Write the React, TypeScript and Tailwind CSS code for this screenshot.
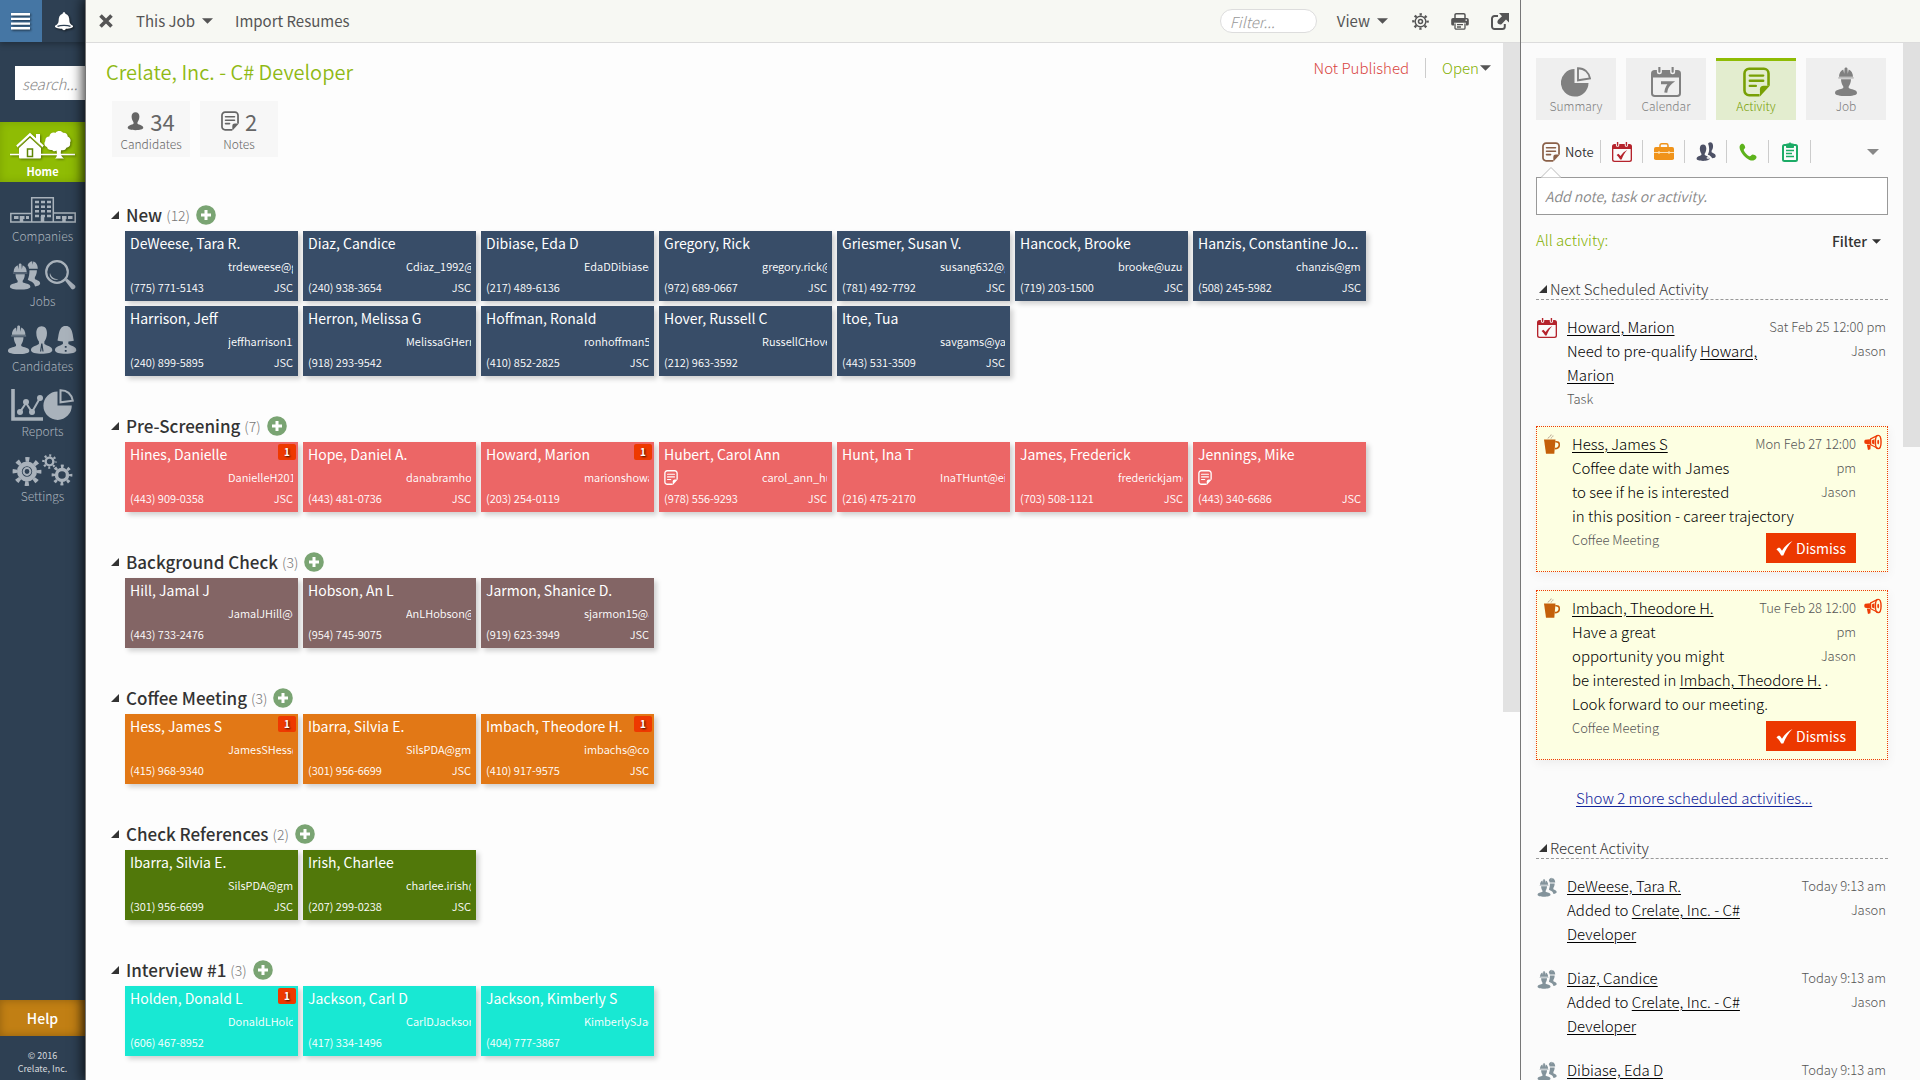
import type { ReactNode } from "react";

type IconProps = { className?: string };

/* ---------- icons ---------- */

const NoteIcon = ({ className }: IconProps) => (
  <svg viewBox="0 0 22 24" className={className} fill="none" aria-hidden="true">
    <path d="M13.500 22.800H5a3.800 3.800 0 0 1-3.800-3.800V5A3.800 3.800 0 0 1 5 1.200h12A3.800 3.800 0 0 1 20.800 5v10" stroke="currentColor" strokeWidth="2.100" />
    <path d="M21.800 15l-8 8.800V18a3 3 0 0 1 3-3z" fill="currentColor" />
    <path d="M5.500 6.800h11M5.500 11h11M5.500 15.200h5" stroke="currentColor" strokeWidth="1.900" strokeLinecap="round" />
  </svg>
);

const PersonShape = () => (
  <path d="M12 1c3.500 0 5.500 2.300 5.500 5.600 0 3.100-1.300 5.600-2.700 7.200v2C17 17.300 23 17.500 23 21c0 2-5 3-11 3S1 23 1 21c0-3.500 6-3.700 8.200-5.200v-2C7.800 12.200 6.500 9.700 6.500 6.600 6.500 3.300 8.500 1 12 1z" />
);

const PersonIcon = ({ className }: IconProps) => (
  <svg viewBox="0 0 24 27" className={className} fill="currentColor" aria-hidden="true"><g transform="scale(1 1.100)"><PersonShape /></g></svg>
);

const WorkerShape = () => (
  <>
    <path d="M5 8.200c0-3.200 2-5.300 4.300-6.100l.9 3.600.4-4.600c.2-.9 2.600-.9 2.800 0l.4 4.600.9-3.600C17 2.900 19 5 19 8.200z" />
    <rect x="4.200" y="8.600" width="15.600" height="1" rx=".5" opacity=".6" />
    <path d="M7 10.200h10c0 2.400-1 4.600-2.300 6v1.200C17 18.700 23 18.400 23 21.600c0 1.800-5 2.600-11 2.600S1 23.400 1 21.600c0-3.200 6-2.900 8.300-4.200v-1.200C8 14.800 7 12.600 7 10.200z" />
  </>
);

const WorkerIcon = ({ className }: IconProps) => (
  <svg viewBox="0 0 24 30" className={className} fill="currentColor" aria-hidden="true"><g transform="scale(1 1.200)"><WorkerShape /></g></svg>
);

const BackWorkerShape = () => (
  <>
    <path d="M20 4.500c1-2 3-3.300 5-3.400l.3 3 .8-2.900c2.600.3 4.800 2.600 4.900 6.300H21.500c-.2-1.200-.7-2.200-1.500-3z" />
    <path d="M22 9h8c0 2.400-.8 4.400-2.200 6v1.600c1.900 1.200 5.700 1.300 5.700 3.900 0 1.400-2.500 2.300-5.500 2.500-.6-2.700-2.600-3.900-5.500-4.800-1.300-.4-1.800-.6-2.300-1.200C21.500 14.800 22 12 22 9z" />
  </>
);

const WorkersIcon = ({ className }: IconProps) => (
  <svg viewBox="0 0 34 34" className={className} fill="currentColor" aria-hidden="true">
    <g transform="scale(1 1.250)">
      <BackWorkerShape />
      <g transform="translate(0 2.500)"><WorkerShape /></g>
    </g>
  </svg>
);

const PeopleIcon = ({ className }: IconProps) => (
  <svg viewBox="0 0 34 33" className={className} fill="currentColor" aria-hidden="true">
    <g transform="scale(1 1.220)">
      <path d="M24 0c3.300 0 5 2.200 5 5.200 0 3-1 5-2.500 6.500v2c2.500 1.500 7 2 7 5.300 0 2-2.500 3-6 3.200-1.500-3-4.500-3.800-7.500-5 2-3 3-6 2-11-.3-1.600-.9-3-1.500-4C21.200 1 22.300 0 24 0z" />
      <g transform="translate(0 2)"><PersonShape /></g>
      <path d="M17.500 22l4.500-4.500 2 2.500-3 4z" fill="#fcfcfc" opacity=".8" />
    </g>
  </svg>
);

const CalendarIcon = ({ className, children }: IconProps & { children: ReactNode }) => (
  <svg viewBox="0 0 24 24" className={className} fill="none" aria-hidden="true">
    <path fill="currentColor" fillRule="evenodd" d="M3 2.300h1.700v1.500a2 2 0 0 0 4 0V2.300h6.600v1.500a2 2 0 0 0 4 0V2.300H21a3 3 0 0 1 3 3V21a3 3 0 0 1-3 3H3a3 3 0 0 1-3-3V5.300a3 3 0 0 1 3-3zM1.600 8.300V21c0 .8.600 1.400 1.400 1.400h18c.8 0 1.400-.6 1.400-1.400V8.300z" />
    <path d="M6.700.3v3.500M17.300.3v3.500" stroke="currentColor" strokeWidth="1.700" strokeLinecap="round" />
    {children}
  </svg>
);

const CheckCalendarIcon = ({ className }: IconProps) => (
  <CalendarIcon className={className}>
    <path d="M5.500 15.500l2.200-1.500 2.600 2.900c2-3.300 4.300-5.700 8-7.400-3 3.200-5 6.500-6.800 11.500H9.800c-1.300-2.500-2.600-4-4.300-5.500z" fill="currentColor" />
  </CalendarIcon>
);

const WeekCalendarIcon = ({ className }: IconProps) => (
  <CalendarIcon className={className}>
    <path d="M8 12.500h8c-3 2.500-4 5-4.200 8" stroke="currentColor" strokeWidth="2.400" />
  </CalendarIcon>
);

const PieIcon = ({ className }: IconProps) => (
  <svg viewBox="0 0 30 30" className={className} aria-hidden="true">
    <path d="M13.500 2v14h14A13.800 13.800 0 1 1 13.500 2z" fill="currentColor" />
    <path d="M17 1.200c6.500 0 11 4.300 12 10.300l-12 1.800z" fill="none" stroke="currentColor" strokeWidth="1.900" />
  </svg>
);

const GearIcon = ({ className }: IconProps) => (
  <svg viewBox="0 0 24 24" className={className} fill="none" stroke="currentColor" aria-hidden="true">
    <circle cx="12" cy="12" r="7.500" strokeWidth="2" />
    <circle cx="12" cy="12" r="2.800" strokeWidth="2.200" />
    <circle cx="12" cy="12" r="10" strokeWidth="3.400" strokeDasharray="3.200 4.654" strokeDashoffset="1.600" />
  </svg>
);

const Gear = ({ cx, cy, r }: { cx: number; cy: number; r: number }) => {
  const step = (2 * Math.PI * r * 1.3) / 8;
  return (
    <g fill="none" stroke="currentColor">
      <circle cx={cx} cy={cy} r={r * 0.82} strokeWidth={r * 0.52} />
      <circle cx={cx} cy={cy} r={r * 1.3} strokeWidth={r * 0.5} strokeDasharray={`${step * 0.42} ${step * 0.58}`} strokeDashoffset={step * 0.21} />
    </g>
  );
};

const MenuIcon = ({ className }: IconProps) => (
  <svg viewBox="0 0 20 17" className={className} fill="#fff" aria-hidden="true">
    <path d="M0 0h19v2.400H0zM0 4.700h19v2.400H0zM0 9.400h19v2.400H0zM0 14h19v2.400H0z" />
  </svg>
);

const BellIcon = ({ className }: IconProps) => (
  <svg viewBox="0 0 20 20" className={className} fill="#fff" aria-hidden="true">
    <path d="M10 1.200c.9 0 1.400.7 1.400 1.500 3 .9 4 3.700 4 7 0 2.200 1 3.600 3.600 5.300v1H1v-1c2.600-1.700 3.600-3.100 3.600-5.300 0-3.300 1-6.100 4-7 0-.8.500-1.500 1.400-1.500z" />
    <ellipse cx="10" cy="15.500" rx="9" ry="2.300" />
    <circle cx="10" cy="17.500" r="1.800" />
    <path d="M3.500 15.300c3-1.200 10-1.200 13 0" stroke="#2e4053" strokeWidth="1.300" fill="none" />
  </svg>
);

const CloseIcon = ({ className }: IconProps) => (
  <svg viewBox="0 0 14 14" className={className} stroke="currentColor" strokeWidth="3.600" aria-hidden="true">
    <path d="M1.500 1.500l11 11M12.500 1.500l-11 11" />
  </svg>
);

const CaretIcon = ({ className }: IconProps) => (
  <svg viewBox="0 0 12 6" className={className} fill="currentColor" aria-hidden="true"><path d="M0 0h12L6 6z" /></svg>
);

const CornerIcon = ({ className }: IconProps) => (
  <svg viewBox="0 0 9 9" className={className} fill="currentColor" aria-hidden="true"><path d="M0 9L9 0v9z" /></svg>
);

const PrinterIcon = ({ className }: IconProps) => (
  <svg viewBox="0 0 18 17" className={className} fill="none" stroke="currentColor" aria-hidden="true">
    <path d="M4 5.500V2a1.200 1.200 0 0 1 1.200-1.200h7.600A1.200 1.200 0 0 1 14 2v3.500" strokeWidth="1.500" />
    <path fillRule="evenodd" d="M2 5h14a1.800 1.800 0 0 1 1.800 1.800V11a1.500 1.500 0 0 1-1.500 1.500H15V9.700H3v2.800H1.700A1.500 1.500 0 0 1 .2 11V6.800A1.800 1.800 0 0 1 2 5z" fill="currentColor" stroke="none" />
    <path d="M4 10.500V15a1.200 1.200 0 0 0 1.200 1.200h7.600A1.200 1.200 0 0 0 14 15v-4.500M6 11.700h6M6 14h4" strokeWidth="1.300" />
    <path d="M14.500 7.200h1.500" stroke="#fff" strokeWidth="1.200" />
  </svg>
);

const ExternalIcon = ({ className }: IconProps) => (
  <svg viewBox="0 0 18 17" className={className} fill="none" stroke="currentColor" aria-hidden="true">
    <path d="M7 3H3.500A2.500 2.500 0 0 0 1 5.500v8A2.500 2.500 0 0 0 3.500 16h7.800a2.500 2.500 0 0 0 2.500-2.500V11" strokeWidth="2" />
    <path d="M8 0h10v9.500l-3-3-4.500 4.800c-1.500.5-3.300.2-4-1.500-.3-1.400.2-2.600 1-3.400L11 3.200z" fill="currentColor" stroke="none" />
  </svg>
);

const PlusIcon = ({ className }: IconProps) => (
  <svg viewBox="0 0 20 20" className={className} aria-hidden="true">
    <circle cx="10" cy="10" r="9.800" fill="#7aa473" />
    <path d="M10 5v10M5 10h10" stroke="#fff" strokeWidth="3" />
  </svg>
);

const BriefcaseIcon = ({ className }: IconProps) => (
  <svg viewBox="0 0 20 17" className={className} aria-hidden="true">
    <path d="M6 4V2.500A1.700 1.700 0 0 1 7.700.8h4.600A1.700 1.700 0 0 1 14 2.500V4" fill="none" stroke="currentColor" strokeWidth="1.500" />
    <rect y="4" width="20" height="13" rx="1.800" fill="currentColor" />
    <path d="M0 9.500h20M5 8v3M15 8v3" stroke="#fbe0b5" strokeWidth="1.100" />
  </svg>
);

const PhoneIcon = ({ className }: IconProps) => (
  <svg viewBox="0 0 20 20" className={className} fill="currentColor" aria-hidden="true">
    <path d="M2.500 1.200C4 .2 5 .8 5.900 2.300c1 1.700 1.400 2.800.4 3.900-1 .9-1.300 1.300-.8 2.400 1 2.300 3.500 4.900 5.900 6 1 .4 1.500 0 2.300-1 .8-1.200 2-1.200 3.700-.2 2.200 1.300 2.500 2.200 1.500 3.800-1.500 2.300-4.300 2.900-7.300 1.600C6.800 16.500 2.700 12 1.100 7.300.2 4.600.6 2.500 2.500 1.200z" />
  </svg>
);

const ClipboardIcon = ({ className }: IconProps) => (
  <svg viewBox="0 0 16 20" className={className} fill="none" stroke="currentColor" aria-hidden="true">
    <rect x="1" y="3" width="14" height="16" rx="1.500" strokeWidth="2" />
    <path d="M4.500 2h2a1.600 1.600 0 0 1 3 0h2v3.500h-7z" fill="currentColor" strokeWidth="1" />
    <path d="M4 8.500h8M4 11.500h6M4 14.500h8" strokeWidth="1.500" />
  </svg>
);

const CoffeeIcon = ({ className }: IconProps) => (
  <svg viewBox="0 0 16 20" className={className} fill="none" aria-hidden="true">
    <path d="M0 5.500h11.500L10.300 19.700H2z" fill="#c4600a" />
    <path d="M11.300 7.800c2.500-.3 4 .6 4 2.900 0 2.600-1.800 3.900-4.500 3.900" stroke="#c4600a" strokeWidth="1.600" />
    <path d="M4 4.500c0-1.800 3-1.400 3.200-4M7 4.500C7.200 3.300 9 3.200 9 1.500" stroke="#b9a58e" strokeWidth="1" />
  </svg>
);

const MegaphoneIcon = ({ className }: IconProps) => (
  <svg viewBox="0 0 19 17" className={className} fill="none" aria-hidden="true">
    <ellipse cx="15" cy="8" rx="3" ry="7" stroke="#ee3c06" strokeWidth="1.500" />
    <path d="M14.500 1L7 4.800v6l7.500 3.700" stroke="#ee3c06" strokeWidth="1.300" />
    <path d="M6.300 5L1.300 5.700C0 6 0 9.500 1.300 9.800l5 .8zM3 10.600l4 .8-.2 4.300-2.600.6zM8.500 6L11 5v5.500L8.500 9.500z" fill="#ee3c06" />
    <ellipse cx="15" cy="8" rx="1" ry="2.500" fill="#ee3c06" />
  </svg>
);

const CheckIcon = ({ className }: IconProps) => (
  <svg viewBox="0 0 17 15" className={className} fill="currentColor" aria-hidden="true">
    <path d="M.5 8.500C1.500 7 2.700 6.500 4 7l2 2.700C8.800 5.200 12.300 2 16.500 0 12.500 4 9.700 8.500 7.300 14.500H5.200C4 12 2.500 10 .5 8.500z" />
  </svg>
);

const HomeIcon = () => (
  <svg viewBox="0 0 66 28" className="h-7 w-[66px] drop-shadow-[1px_1px_1px_rgba(0,0,0,0.4)]" aria-hidden="true">
    <path d="M0 23.500h65" stroke="#fff" strokeWidth="1.500" />
    <path d="M7 15.500L20 3.500l13 12" fill="none" stroke="#fff" strokeWidth="2.400" />
    <path d="M26 3h4v9l-4-4z" fill="#fff" />
    <path d="M9 17L20 6.800 31 17v9.500a1 1 0 0 1-1 1H10a1 1 0 0 1-1-1z" fill="#fff" />
    <path d="M8 16.200L20 5.200l12 11" fill="none" stroke="#7fa604" strokeWidth=".8" />
    <path d="M17.500 18h5v7.500h-5z" fill="#fff" stroke="#5f8605" strokeWidth="1.500" />
    <path d="M45 27.500c2-1.500 2.500-4 1.500-8-1.500 1-3.500.8-4.300-.6-2.500.6-4.900-.5-5.200-2.900-2.600-.8-3.400-4-1.700-6-.3-2.600 1.600-4.500 4-4.500C40 2 42.800.8 45.300 2c2-2.500 6-2.400 7.700-.3 2.700-.3 4.700 1.400 4.700 3.800 2.700 1 3.700 4 2.300 6.300.8 2.700-1 4.900-3.600 4.900-.8 2.300-3 3-5 2.200-1.300 3.300-.7 6.800 2.600 8.600z" fill="#fff" />
  </svg>
);

const CompaniesIcon = () => (
  <svg viewBox="0 0 66 26" className="h-[26px] w-[66px]" fill="none" stroke="currentColor" aria-hidden="true">
    <path d="M21.700 25V.8h21.600V25M21.700 16.500H.8V25h64.400v-9H43.300" strokeWidth="1.500" />
    <path d="M25 5h16M25 9.700h16M25 14.300h16M25 19h16" strokeWidth="2.600" strokeDasharray="4 2" />
    <path d="M4 20.500h15M46 20.500h17" strokeWidth="3" strokeDasharray="4.500 1.500" />
    <path d="M11.500 19v6M32.500 19v6M54 19v6" strokeWidth="3.500" />
  </svg>
);

const JobsIcon = () => (
  <svg viewBox="0 0 67 30" className="h-[30px] w-[67px]" fill="currentColor" aria-hidden="true">
    <g transform="scale(.93 1.150)"><BackWorkerShape /></g>
    <g transform="translate(0 3) scale(.93 1.100)"><WorkerShape /></g>
    <circle cx="48" cy="12" r="10.800" fill="none" stroke="currentColor" strokeWidth="2.200" />
    <path d="M41 13c1 4 4.500 6.500 8.500 6.200-4.500 2-10-1.500-8.500-6.200z" />
    <path d="M56 20.500l2-2 8 7c1.500 2-1 5-3.500 3.500z" />
  </svg>
);

const CandidatesIcon = () => (
  <svg viewBox="0 0 71 30" className="h-[30px] w-[71px]" fill="currentColor" aria-hidden="true">
    <g transform="scale(.97 1.200)"><WorkerShape /></g>
    <g transform="translate(23 0) scale(.97 1.200)"><PersonShape /></g>
    <path d="M34.800 18.500l1.200 8M34.800 18.500l-1.200 8" stroke="#2e4053" strokeWidth="1.200" />
    <g transform="translate(47 0) scale(.97 1.200)"><PersonShape /></g>
    <path d="M50.500 15.500C52 12 51 1 58.700 1S65.500 12 67 15.500c-3 1.500-13.500 1.500-16.500 0z" />
    <path d="M58.700 21v1.800M58.700 25v1.800" stroke="#2e4053" strokeWidth="1.800" />
  </svg>
);

const ReportsIcon = () => (
  <svg viewBox="0 0 63 32" className="h-8 w-[63px]" fill="none" stroke="currentColor" aria-hidden="true">
    <path d="M2 0v30h30" strokeWidth="3.600" />
    <path d="M9 23l6-9 6 9 8-14" strokeWidth="2" />
    <g fill="currentColor" stroke="none">
      <circle cx="9" cy="23" r="3" /><circle cx="15" cy="13" r="3" /><circle cx="21" cy="23" r="3" /><circle cx="29" cy="9" r="3" />
      <path d="M46.500 2.500v14h14.300A14.200 14.200 0 1 1 46.500 2.500z" />
    </g>
    <path d="M49.500 1.200c6.500 0 11 4 12.300 10.500l-12.300 1.600z" strokeWidth="2" />
  </svg>
);

const SettingsIcon = () => (
  <svg viewBox="0 0 61 32" className="h-8 w-[61px]" aria-hidden="true">
    <Gear cx={15} cy={17.500} r={9.300} />
    <circle cx="15" cy="17.500" r="3.400" fill="none" stroke="currentColor" strokeWidth="2" />
    <Gear cx={37.500} cy={7.500} r={4.700} />
    <Gear cx={50} cy={21} r={6.700} />
  </svg>
);

/* ---------- data ---------- */

type Candidate = { name: string; email?: string; phone: string; jsc?: boolean; badge?: boolean; note?: boolean };
type Stage = { title: string; count: number; color: string; people: Candidate[] };

const stages: Stage[] = [
  {
    title: "New", count: 12, color: "bg-[#384d68]",
    people: [
      { name: "DeWeese, Tara R.", email: "trdeweese@gm", phone: "(775) 771-5143", jsc: true },
      { name: "Diaz, Candice", email: "Cdiaz_1992@g", phone: "(240) 938-3654", jsc: true },
      { name: "Dibiase, Eda D", email: "EdaDDibiase@", phone: "(217) 489-6136" },
      { name: "Gregory, Rick", email: "gregory.rick@g", phone: "(972) 689-0667", jsc: true },
      { name: "Griesmer, Susan V.", email: "susang632@gm", phone: "(781) 492-7792", jsc: true },
      { name: "Hancock, Brooke", email: "brooke@uzu-", phone: "(719) 203-1500", jsc: true },
      { name: "Hanzis, Constantine Jo...", email: "chanzis@gma", phone: "(508) 245-5982", jsc: true },
      { name: "Harrison, Jeff", email: "jeffharrison12", phone: "(240) 899-5895", jsc: true },
      { name: "Herron, Melissa G", email: "MelissaGHerr", phone: "(918) 293-9542" },
      { name: "Hoffman, Ronald", email: "ronhoffman5", phone: "(410) 852-2825", jsc: true },
      { name: "Hover, Russell C", email: "RussellCHove", phone: "(212) 963-3592" },
      { name: "Itoe, Tua", email: "savgams@ya", phone: "(443) 531-3509", jsc: true },
    ],
  },
  {
    title: "Pre-Screening", count: 7, color: "bg-[#ec6666]",
    people: [
      { name: "Hines, Danielle", email: "DanielleH201", phone: "(443) 909-0358", jsc: true, badge: true },
      { name: "Hope, Daniel A.", email: "danabramho", phone: "(443) 481-0736", jsc: true },
      { name: "Howard, Marion", email: "marionshowa", phone: "(203) 254-0119", badge: true },
      { name: "Hubert, Carol Ann", email: "carol_ann_hu", phone: "(978) 556-9293", jsc: true, note: true },
      { name: "Hunt, Ina T", email: "InaTHunt@ei", phone: "(216) 475-2170" },
      { name: "James, Frederick", email: "frederickjame", phone: "(703) 508-1121", jsc: true },
      { name: "Jennings, Mike", phone: "(443) 340-6686", jsc: true, note: true },
    ],
  },
  {
    title: "Background Check", count: 3, color: "bg-[#836565]",
    people: [
      { name: "Hill, Jamal J", email: "JamalJHill@e", phone: "(443) 733-2476" },
      { name: "Hobson, An L", email: "AnLHobson@", phone: "(954) 745-9075" },
      { name: "Jarmon, Shanice D.", email: "sjarmon15@a", phone: "(919) 623-3949", jsc: true },
    ],
  },
  {
    title: "Coffee Meeting", count: 3, color: "bg-[#e27816]",
    people: [
      { name: "Hess, James S", email: "JamesSHess@", phone: "(415) 968-9340", badge: true },
      { name: "Ibarra, Silvia E.", email: "SilsPDA@gm", phone: "(301) 956-6699", jsc: true },
      { name: "Imbach, Theodore H.", email: "imbachs@co", phone: "(410) 917-9575", jsc: true, badge: true },
    ],
  },
  {
    title: "Check References", count: 2, color: "bg-[#51780a]",
    people: [
      { name: "Ibarra, Silvia E.", email: "SilsPDA@gm", phone: "(301) 956-6699", jsc: true },
      { name: "Irish, Charlee", email: "charlee.irish@", phone: "(207) 299-0238", jsc: true },
    ],
  },
  {
    title: "Interview #1", count: 3, color: "bg-[#18e8d3]",
    people: [
      { name: "Holden, Donald L", email: "DonaldLHold", phone: "(606) 467-8952", badge: true },
      { name: "Jackson, Carl D", email: "CarlDJackson", phone: "(417) 334-1496" },
      { name: "Jackson, Kimberly S", email: "KimberlySJac", phone: "(404) 777-3867" },
    ],
  },
];

/* ---------- sidebar ---------- */

const navItems = [
  { label: "Companies", icon: <CompaniesIcon /> },
  { label: "Jobs", icon: <JobsIcon /> },
  { label: "Candidates", icon: <CandidatesIcon /> },
  { label: "Reports", icon: <ReportsIcon /> },
  { label: "Settings", icon: <SettingsIcon /> },
];

function Sidebar() {
  return (
    <aside className="flex w-[85px] shrink-0 flex-col bg-[#2e4053]">
      <div className="flex h-[42px] shrink-0 shadow-[0_2px_6px_rgba(0,0,0,0.3)]">
        <button aria-label="Menu" className="flex w-[42px] items-center justify-center bg-[#4576a4]">
          <MenuIcon className="h-[17px] w-5 drop-shadow-[1px_1px_1px_rgba(0,0,0,0.6)]" />
        </button>
        <button aria-label="Notifications" className="flex flex-1 items-center justify-center">
          <BellIcon className="h-5 w-5 drop-shadow-[1px_1px_1px_rgba(0,0,0,0.6)]" />
        </button>
      </div>
      <div className="mt-6 overflow-hidden pl-[15px]">
        <input aria-label="Search" placeholder="search..." className="h-[34px] w-24 bg-white px-[7px] text-[15px] font-light italic placeholder:text-[#8a8a8a]" />
      </div>
      <nav className="mt-[22px] flex flex-col gap-[5px]">
        <a href="#home" className="flex h-[60px] flex-col items-center bg-[#8fbc04] pt-[7px] text-[11px] font-bold text-white shadow-[inset_0_0_8px_rgba(0,0,0,0.15)]">
          <span className="flex h-8 items-center"><HomeIcon /></span>
          <span className="leading-5">Home</span>
        </a>
        {navItems.map((n) => (
          <a key={n.label} href={`#${n.label.toLowerCase()}`} className="flex h-[60px] flex-col items-center pt-[7px] text-xs font-light text-[#a9b2bb]">
            <span className="flex h-8 items-center">{n.icon}</span>
            <span className="leading-5">{n.label}</span>
          </a>
        ))}
      </nav>
      <button className="mt-auto h-9 bg-[#c17f14] text-sm font-medium text-white shadow-[inset_0_0_8px_rgba(0,0,0,0.25)]">Help</button>
      <p className="pt-[13px] pb-[5px] text-center text-[9px] leading-[13px] text-[#d5d9dd]">
        © 2016<br />Crelate, Inc.
      </p>
    </aside>
  );
}

/* ---------- pipeline ---------- */

function CandidateCard({ c, color }: { c: Candidate; color: string }) {
  return (
    <article className={`${color} relative h-[70px] w-[173px] px-[5px] pt-0.5 text-white shadow-[3px_3px_5px_rgba(0,0,0,0.18)]`}>
      <h3 className="overflow-hidden text-sm leading-5 font-normal whitespace-nowrap">{c.name}</h3>
      <div className="mt-[5px] flex h-4 items-center justify-between text-[11px] leading-4 font-[350]">
        <span>{c.note && <NoteIcon className="h-[15px] w-3.5" />}</span>
        <span className="w-[65px] overflow-hidden whitespace-nowrap">{c.email}</span>
      </div>
      <div className="mt-[5px] flex justify-between text-[11px] leading-4 font-[350]">
        <span>{c.phone}</span>
        {c.jsc && <span>JSC</span>}
      </div>
      {c.badge && (
        <span className="absolute top-0.5 right-0.5 flex h-4 w-[18px] items-center justify-center rounded-[2px] bg-[#ee3900] text-[10px] leading-4 font-bold [text-shadow:1px_1px_2px_rgba(0,0,0,0.8)]">1</span>
      )}
    </article>
  );
}

function StageSection({ stage }: { stage: Stage }) {
  return (
    <section className="mb-[37px]">
      <div className="flex h-[26px] items-center">
        <button aria-label={`Collapse ${stage.title}`} className="ml-[25px] text-[#333]"><CornerIcon className="h-2 w-2" /></button>
        <h2 className="ml-[7px] text-[17px] leading-[26px] font-medium text-[#333]">{stage.title}</h2>
        <span className="ml-1 text-sm leading-[26px] font-light text-[#777]">({stage.count})</span>
        <button aria-label={`Add to ${stage.title}`} className="ml-1.5"><PlusIcon className="h-5 w-5" /></button>
      </div>
      <div className="mt-[3px] ml-[39px] flex flex-wrap gap-[5px]">
        {stage.people.map((c) => <CandidateCard key={c.name} c={c} color={stage.color} />)}
      </div>
    </section>
  );
}

function Pipeline() {
  return (
    <main className="flex min-w-0 flex-1 flex-col">
      <header className="flex h-[43px] shrink-0 items-center border-b border-[#dcdcdc] bg-[#f7f8f3] text-[15px] leading-5 text-[#555]">
        <button aria-label="Close" className="ml-[13px]"><CloseIcon className="h-3.5 w-3.5" /></button>
        <button className="ml-[23px] flex items-center gap-[7px]">This Job <CaretIcon className="h-1.5 w-[11px]" /></button>
        <button className="ml-[22px]">Import Resumes</button>
        <input aria-label="Filter candidates" placeholder="Filter..." className="ml-auto h-6 w-[97px] rounded-full border border-[#ddd] bg-white px-[9px] text-[15px] font-light italic placeholder:text-[#999]" />
        <button className="ml-5 flex items-center gap-[7px]">View <CaretIcon className="h-1.5 w-[11px]" /></button>
        <button aria-label="Options" className="ml-6"><GearIcon className="h-[17px] w-[17px]" /></button>
        <button aria-label="Print" className="ml-[22px]"><PrinterIcon className="h-[17px] w-[18px]" /></button>
        <button aria-label="Open in new window" className="mr-[11px] ml-[22px]"><ExternalIcon className="h-[17px] w-[18px]" /></button>
      </header>
      <div className="flex min-h-0 flex-1">
        <div className="min-w-0 flex-1 overflow-hidden bg-[#fdfdfd] pt-[13px]">
          <div className="flex items-start justify-between pr-3 pl-5">
            <h1 className="text-xl leading-8 font-[350] text-[#8fb914]">Crelate, Inc. - C# Developer</h1>
            <div className="flex h-6 items-center text-[15px] font-light">
              <span className="text-[#d9453f]">Not Published</span>
              <span className="mx-4 h-5 w-px bg-[#ccc]" />
              <button className="flex items-center gap-px text-[#84b000]">Open <CaretIcon className="h-1.5 w-[11px] text-[#555]" /></button>
            </div>
          </div>
          <div className="mt-[13px] mb-[45px] ml-[26px] flex gap-2.5 text-[#666]">
            <div className="flex h-14 w-[78px] flex-col items-center bg-[#f7f7f7] pt-1.5">
              <span className="flex items-center gap-1.5 text-[22px] leading-7"><PersonIcon className="h-5 w-[17px]" />34</span>
              <span className="text-xs leading-[18px] font-light">Candidates</span>
            </div>
            <div className="flex h-14 w-[78px] flex-col items-center bg-[#f7f7f7] pt-1.5">
              <span className="flex items-center gap-1.5 text-[22px] leading-7"><NoteIcon className="h-5 w-[18px]" />2</span>
              <span className="text-xs leading-[18px] font-light">Notes</span>
            </div>
          </div>
          {stages.map((s) => <StageSection key={s.title} stage={s} />)}
        </div>
        <div className="w-[17px] shrink-0 bg-[#fdfdfd]"><div className="h-[64.5%] bg-[#e2e2e2]" /></div>
      </div>
    </main>
  );
}

/* ---------- activity panel ---------- */

const tabs = [
  { label: "Summary", icon: <PieIcon className="h-[30px] w-[30px]" /> },
  { label: "Calendar", icon: <WeekCalendarIcon className="h-[30px] w-[30px]" /> },
  { label: "Activity", icon: <NoteIcon className="h-[30px] w-[27px]" />, active: true },
  { label: "Job", icon: <WorkerIcon className="h-[30px] w-6" /> },
];

const kinds = [
  { label: "Task", icon: <CheckCalendarIcon className="h-5 w-5 text-[#b5232c]" /> },
  { label: "Placement", icon: <BriefcaseIcon className="h-[17px] w-5 text-[#f0931a]" /> },
  { label: "Meeting", icon: <PeopleIcon className="h-5 w-5 text-[#4d5166]" /> },
  { label: "Call", icon: <PhoneIcon className="h-[18px] w-[18px] text-[#5db31c]" /> },
  { label: "Form", icon: <ClipboardIcon className="h-5 w-4 text-[#1cab66]" /> },
];

const NameLink = ({ children }: { children: ReactNode }) => (
  <a href="#record" className="underline underline-offset-2">{children}</a>
);

function GroupHeading({ children }: { children: ReactNode }) {
  return (
    <h2 className="flex items-center gap-[3px] border-b border-dashed border-[#999] pl-[3px] text-[15px] leading-5 font-light text-[#333]">
      <CornerIcon className="h-2 w-2" />{children}
    </h2>
  );
}

function Alert({ name, date, children }: { name: string; date: string; children: ReactNode }) {
  return (
    <article className="flex border border-dotted border-[#ee3c06] bg-[#fdffe2] pt-[5px] pb-2 pl-[7px] shadow-[0_3px_10px_rgba(0,0,0,0.06)]">
      <CoffeeIcon className="mt-0.5 h-5 w-4 shrink-0" />
      <div className="ml-3 min-w-0 flex-1">
        <div className="float-right ml-2.5 w-[116px] text-right text-[13px] text-[#555]">{date}<br />Jason</div>
        <NameLink>{name}</NameLink><br />
        {children}
        <div className="flex clear-both justify-between">
          <span className="text-[13px] text-[#555]">Coffee Meeting</span>
          <button className="mt-[5px] flex h-[30px] w-[90px] items-center justify-center gap-[3px] bg-[#ec3800] text-sm font-normal text-white"><CheckIcon className="h-[15px] w-[17px]" />Dismiss</button>
        </div>
      </div>
      <MegaphoneIcon className="mt-0.5 mr-[5px] ml-2 h-[17px] w-[18px] shrink-0" />
    </article>
  );
}

function Entry({ icon, name, date, children }: { icon: ReactNode; name: string; date: string; children: ReactNode }) {
  return (
    <article className="flex">
      <span className="ml-px w-[30px] shrink-0 pt-[3px]">{icon}</span>
      <div className="min-w-0 flex-1 pr-0.5">
        <div className="float-right ml-2 w-[120px] text-right text-[13px] text-[#555]">{date}<br />Jason</div>
        <NameLink>{name}</NameLink><br />
        {children}
      </div>
    </article>
  );
}

function ActivityPanel() {
  return (
    <aside className="flex w-[400px] shrink-0 flex-col border-l border-[#777] bg-[#fbfbfb]">
      <div className="h-[43px] shrink-0 border-b border-[#dcdcdc] bg-[#f7f8f3]" />
      <div className="flex min-h-0 flex-1">
        <div className="min-w-0 flex-1 overflow-hidden px-[15px] pt-[15px] text-[15px] leading-6 font-light text-black">
          <div className="flex gap-2.5">
            {tabs.map((t) => (
              <button
                key={t.label}
                className={`flex h-[62px] w-20 flex-col items-center border-t-[3px] pt-1.5 text-xs leading-[18px] ${t.active ? "border-[#8fbc04] bg-[#e3edcf] text-[#78a005]" : "border-[#efefef] bg-[#efefef] text-[#808080]"}`}
              >
                {t.icon}
                <span>{t.label}</span>
              </button>
            ))}
          </div>
          <div className="mt-5 flex h-[23px] items-center">
            <button className="flex h-full w-[65px] items-center gap-[5px] border-r border-[#ccc] pl-1.5 text-[13px] font-[350] text-[#333]"><NoteIcon className="h-5 w-[18px] text-[#8a6048]" />Note</button>
            {kinds.map((k) => (
              <button key={k.label} aria-label={k.label} className="flex h-full w-[42px] items-center justify-center border-r border-[#ccc]">{k.icon}</button>
            ))}
            <button aria-label="More activity types" className="mr-[9px] ml-auto text-[#888]"><CaretIcon className="h-1.5 w-3" /></button>
          </div>
          <div className="relative mt-3.5">
            <input aria-label="Activity" placeholder="Add note, task or activity." className="block h-[38px] w-full border border-[#999] bg-white px-2 text-sm font-[350] italic placeholder:text-[#888]" />
            <svg viewBox="0 0 20 11" className="absolute -top-2.5 left-[5px] h-[11px] w-5" fill="#fff" stroke="#bbb" aria-hidden="true"><path d="M0 10.500L10 .5l10 10" /></svg>
          </div>
          <div className="mt-[13px] flex h-6 items-center justify-between">
            <span className="text-[#84b000]">All activity:</span>
            <button className="mt-0.5 mr-[7px] flex items-center gap-[5px] text-sm font-medium text-[#333]">Filter <CaretIcon className="h-[5px] w-[9px]" /></button>
          </div>
          <div className="mt-[27px]"><GroupHeading>Next Scheduled Activity</GroupHeading></div>
          <div className="mt-[15px]">
            <Entry icon={<CheckCalendarIcon className="h-5 w-5 text-[#b5232c]" />} name="Howard, Marion" date="Sat Feb 25 12:00 pm">
              Need to pre-qualify <NameLink>Howard, Marion</NameLink>
              <div className="text-[13px] text-[#555]">Task</div>
            </Entry>
          </div>
          <div className="mt-[15px] flex flex-col gap-[18px]">
            <Alert name="Hess, James S" date="Mon Feb 27 12:00 pm">
              Coffee date with James to see if he is interested in this position - career trajectory
            </Alert>
            <Alert name="Imbach, Theodore H." date="Tue Feb 28 12:00 pm">
              Have a great opportunity you might be interested in <NameLink>Imbach, Theodore H.</NameLink> . Look forward to our meeting.
            </Alert>
          </div>
          <a href="#scheduled" className="mt-[26px] ml-10 block w-fit text-[#10239a] underline underline-offset-2">Show 2 more scheduled activities...</a>
          <div className="mt-7"><GroupHeading>Recent Activity</GroupHeading></div>
          <div className="mt-[15px] flex flex-col gap-5">
            {["DeWeese, Tara R.", "Diaz, Candice", "Dibiase, Eda D"].map((n) => (
              <Entry key={n} icon={<WorkersIcon className="h-5 w-5 text-[#83939b]" />} name={n} date="Today 9:13 am">
                Added to <NameLink>Crelate, Inc. - C# Developer</NameLink>
              </Entry>
            ))}
          </div>
        </div>
        <div className="w-[17px] shrink-0"><div className="h-[39%] bg-[#e0e0e0]" /></div>
      </div>
    </aside>
  );
}

export default function App() {
  return (
    <div className="flex h-screen overflow-hidden bg-[#fdfdfd] font-['Noto_Sans_CJK_SC','Noto_Sans',sans-serif]">
      <Sidebar />
      <div className="relative flex min-w-0 flex-1 border-l border-[#777] shadow-[0_0_12px_2px_rgba(0,0,0,0.8)]">
        <Pipeline />
        <ActivityPanel />
      </div>
    </div>
  );
}
